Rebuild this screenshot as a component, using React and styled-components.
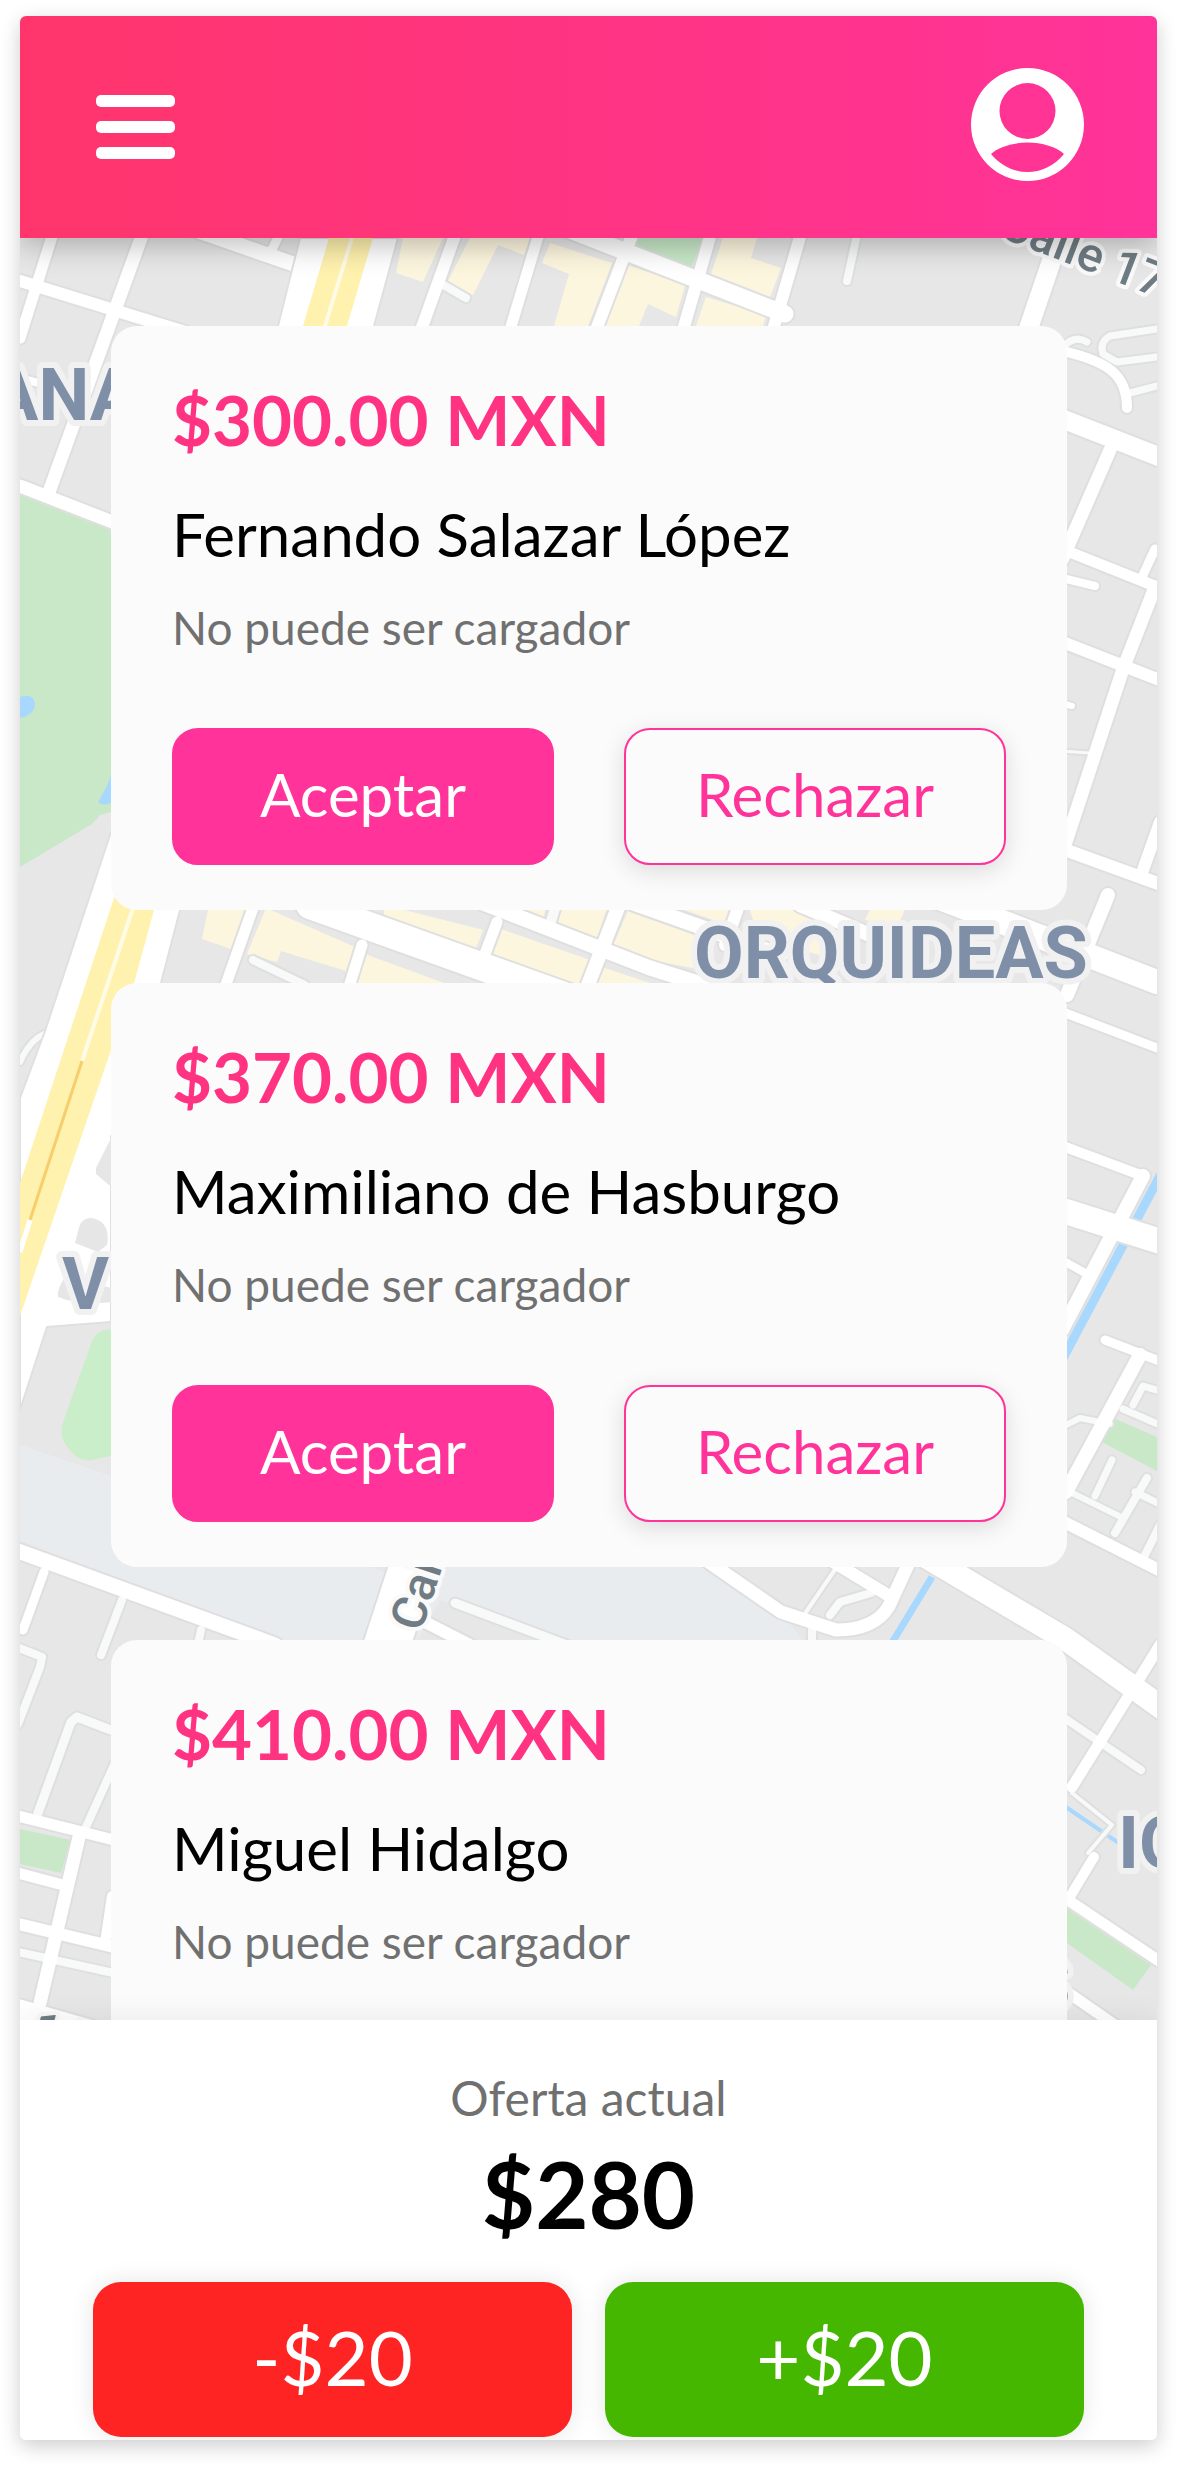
import React, { useState } from "react";
import styled, { createGlobalStyle } from "styled-components";

const offers = [
    { id: 1, price: 300, name: "Fernando Salazar López", note: "No puede ser cargador" },
    { id: 2, price: 370, name: "Maximiliano de Hasburgo", note: "No puede ser cargador" },
    { id: 3, price: 410, name: "Miguel Hidalgo", note: "No puede ser cargador" },
];

const blocks = [
    "403,238 443,238 423,282 396,273",
    "470,238 530,238 524,255 498,245 473,295 447,283",
    "550,243 612,263 588,326 554,326 569,274 542,263",
    "627,265 685,285 676,317 648,304 639,326 605,326",
    "723,238 757,238 751,258 781,268 770,297 710,277",
    "706,297 766,315 763,326 696,326",
    "209,905 247,905 231,949 202,939",
    "266,908 355,947 346,971 281,951 277,962 247,954",
    "365,954 444,983 444,990 355,990",
    "385,905 483,930 473,956 383,919",
    "501,929 590,960 580,990 550,986 488,962",
    "509,905 546,905 543,922",
    "563,905 608,905 595,945 555,930",
    "628,911 700,937 693,968 610,952",
    "602,967 650,983 650,990 593,990",
    "670,905 732,905 725,924",
    "748,905 795,905 850,930 840,960 760,940",
    "872,905 907,905 898,925 865,920",
];

const parks = [
    "20,495 111,530 111,812 100,815 92,824 20,867",
    "637,238 704,238 691,268 637,248",
    "1113,1418 1157,1437 1157,1471 1102,1442",
    "1067,1908 1072,1912 1151,1965 1133,1990 1067,1943",
    "20,1829 71,1840 61,1873 20,1864",
];

const roads = [
    ["M20 281L185 332", 12],
    ["M54 230L20 338", 11],
    ["M144 230L49 492", 13],
    ["M190 228L305 268", 15],
    ["M282 230L268 257", 9],
    ["M20 378L50 386", 8],
    ["M20 486L115 523", 13],
    ["M457 230L421 330", 12],
    ["M540 230L510 330", 11],
    ["M634 230L596 330", 12],
    ["M712 230L683 330", 12],
    ["M802 230L773 330", 12],
    ["M570 230L785 314", 17],
    ["M1062 230L1028 330", 19],
    ["M254 905L224 990", 11],
    ["M362 945L348 990", 11],
    ["M310 905L575 1000", 28],
    ["M497 922L482 962", 11],
    ["M483 903L650 968L720 990", 15],
    ["M619 905L586 990", 14],
    ["M633 903L780 955", 15],
    ["M739 905L725 945", 12],
    ["M800 905L870 935", 14],
    ["M940 898L1157 982", 24],
    ["M1108 895L1067 995", 14],
    ["M1067 352C1107 362 1127 374 1127 408", 10],
    ["M1060 418L1165 459", 19],
    ["M1110 450L1062 560", 13],
    ["M1062 549L1157 587", 11],
    ["M1062 578L1095 586", 8],
    ["M1155 549L1143 575", 9],
    ["M1155 587L1123 669L1066 842", 13],
    ["M1060 641L1162 681", 12],
    ["M1060 703L1072 706", 6],
    ["M1060 848L1162 885", 13],
    ["M1160 822L1143 870", 12],
    ["M1060 1011L1165 1051", 9],
    ["M1060 1145L1143 1176L1062 1330", 10],
    ["M1143 1176L1062 1330", 14],
    ["M1055 1208L1165 1243", 25],
    ["M1060 1259L1087 1274", 8],
    ["M1105 1340L1162 1362", 9],
    ["M1140 1355L1066 1492", 14],
    ["M1058 1519L1165 1573", 12],
    ["M925 1556L1067 1640L1165 1710", 23],
    ["M1160 1645L1128 1697L1072 1787", 11],
    ["M1094 1857L1068 1900", 10],
    ["M1068 1900L1162 1963", 11],
    ["M1060 1987L1122 2030", 11],
    ["M10 1548L275 1645", 15],
    ["M44 1572L23 1630", 9],
    ["M418 1550L382 1660", 46],
    ["M421 1620L470 1645", 12],
    ["M700 1556L781 1612L836 1630Q875 1630 889 1606L912 1556", 13],
    ["M830 1560L891 1597", 12],
    ["M14 1815L118 1841", 11],
    ["M14 1872L63 1885", 11],
    ["M80 1833L40 2003", 13],
    ["M14 1923L118 1948", 12],
    ["M112 1896L105 1943", 10],
    ["M14 2010L118 2040", 24],
];

const lanes = [
    ["M440 283L466 298", 8],
    ["M858 230L847 281", 8],
    ["M556 905L549 928", 10],
    ["M253 960L305 985", 8],
    ["M1157 329L1110 336Q1099 342 1103 354L1117 362L1157 357", 7],
    ["M1062 348Q1074 334 1087 342", 7],
    ["M1130 393L1157 386", 7],
    ["M1060 751L1090 753", 3],
    ["M20 1062Q30 1040 44 1034", 6],
    ["M1060 1428L1080 1418L1110 1424", 6],
    ["M1123 1409L1160 1425", 7],
    ["M1133 1405L1143 1386L1160 1391", 7],
    ["M1060 1487L1123 1518", 6],
    ["M1112 1460L1095 1496", 7],
    ["M1147 1478L1115 1533", 8],
    ["M1135 1492L1160 1504", 7],
    ["M1160 1525L1145 1555", 8],
    ["M1060 1715L1141 1770", 8],
    ["M1072 1793L1112 1825L1088 1853", 4],
    ["M122 1600L101 1655", 8],
    ["M201 1630L197 1648", 8],
    ["M14 1646L42 1657L40 1667L18 1724", 8],
    ["M116 1732L77 1717L71 1722L38 1813", 9],
    ["M114 1765L86 1827", 8],
    ["M14 1951L118 1974", 8],
    ["M455 1603L575 1648", 9],
    ["M871 1593L840 1602L830 1615", 8],
    ["M836 1568L806 1612", 4],
    ["M812 1630L812 1645", 8],
];

function CityMap() {
    return (
        <MapSvg viewBox="20 238 1137 1782" preserveAspectRatio="xMidYMin slice" aria-hidden="true">
            <rect x="0" y="200" width="1200" height="1900" fill="#e7e7e7" />
            <path d="M20 1445L111 1476L700 1556L781 1612L806 1645H260L20 1555Z" fill="#e9ecef" />
            <path d="M440 1600L566 1645H415Z" fill="#e7e7e7" />
            <path d="M355 1560L396 1560L392 1576Z" fill="#e7e7e7" />
            {parks.map((p) => (
                <polygon key={p} points={p} fill="#c8e8c8" />
            ))}
            <path d="M120 1328L105 1330Q96 1332 92 1341L62 1425Q60 1437 66 1445Q76 1462 92 1460L120 1454Z" fill="#caeeca" />
            {blocks.map((p) => (
                <polygon key={p} points={p} fill="#fdf6df" />
            ))}
            <g fill="none" stroke="#a9d8ff">
                <path d="M1162 1172L1060 1364" strokeWidth="9" />
                <path d="M932 1577L890 1646" strokeWidth="7" />
                <path d="M1060 1803L1160 1871" strokeWidth="4" />
            </g>
            <path d="M20 697Q35 692 35 706Q32 716 20 718Z" fill="#a9d8ff" />
            <path d="M115 765L106 788L98 802Q104 808 115 800Z" fill="#a9d8ff" />

            {/* road edges first, so that crossings stay open */}
            <g fill="none" stroke="#dfdfdf" strokeLinejoin="round" strokeLinecap="round">
                {roads.concat(lanes).map(([d, w]) => (
                    <path key={d + w} d={d} strokeWidth={w + 4} />
                ))}
            </g>
            <g fill="none" stroke="#f8faf9" strokeLinejoin="round" strokeLinecap="round">
                {lanes.map(([d, w]) => (
                    <path key={d} d={d} strokeWidth={w} />
                ))}
            </g>
            <g fill="none" stroke="#ffffff" strokeLinejoin="round" strokeLinecap="round">
                {roads.map(([d, w]) => (
                    <path key={d + w} d={d} strokeWidth={w} />
                ))}
            </g>

            <path
                d="M398 238L374 326L180 910L161 983L111 1137V1322L47 1327L20 1410V1098L45 1031L111 832L278 326L300 238Z"
                fill="#ffffff"
                stroke="#e0e0e0"
                strokeWidth="2"
            />
            <path d="M329 238H373L347 326L154 910L134 983L111 1050L20 1316V1183L115 895L303 326Z" fill="#fff1ae" />
            <path d="M352 238L325 326L134 905L82 1061" fill="none" stroke="#fffbe6" strokeWidth="4" />
            <path d="M82 1061L30 1220" fill="none" stroke="#f6cf6c" strokeWidth="3" />
            <path d="M30 1220L20 1252" fill="none" stroke="#ffffff" strokeWidth="5" />
            <g fill="#e6e6e6">
                <path d="M115 1130L96 1168V1174L115 1190Z" />
                <path d="M75 1243L80 1224Q88 1214 100 1221Q110 1228 107 1245L98 1252Z" />
                <path d="M66 1276Q56 1290 58 1297Q80 1306 111 1302V1288Z" />
            </g>

            <District x="-10" y="420">ANA</District>
            <District x="694" y="978">ORQUIDEAS</District>
            <District x="62" y="1309">V</District>
            <District x="1118" y="1868">IO</District>
            <District x="1026" y="2010">S</District>
            <Street transform="translate(997 236) rotate(21)">Calle 17</Street>
            <Street transform="translate(421 1633) rotate(-72)">Calle</Street>
            <Street transform="translate(30 2044) rotate(14)">1 Nte</Street>
        </MapSvg>
    );
}

function OfferCard({ offer }) {
    return (
        <Card>
            <Price>${offer.price.toFixed(2)} MXN</Price>
            <Name>{offer.name}</Name>
            <Note>{offer.note}</Note>
            <Actions>
                <ActionButton type="button">Aceptar</ActionButton>
                <ActionButton type="button" $outline>
                    Rechazar
                </ActionButton>
            </Actions>
        </Card>
    );
}

function App() {
    const [bid, setBid] = useState(280);

    return (
        <>
            <GlobalStyle />
            <Screen>
                <Header>
                    <IconButton type="button" aria-label="Menú">
                        <svg width="80" height="72" viewBox="0 0 80 72" fill="#ffffff">
                            <rect y="6" width="79" height="12" rx="5" />
                            <rect y="32" width="79" height="12" rx="5" />
                            <rect y="58" width="79" height="12" rx="5" />
                        </svg>
                    </IconButton>
                    <IconButton type="button" aria-label="Perfil">
                        <svg width="113" height="113" viewBox="0 0 113 113">
                            <path
                                fill="#ffffff"
                                fillRule="evenodd"
                                d="M56.500 0a56.500 56.500 0 0 1 0 113a56.500 56.500 0 0 1 0-113ZM56.500 15a28 28 0 0 0 0 56a28 28 0 0 0 0-56ZM56.500 74.500C42 74.500 27 79 20 86C30 98 43 104 56.500 104S83 98 93 86C86 79 71 74.500 56.500 74.500Z"
                            />
                        </svg>
                    </IconButton>
                </Header>
                <Stage>
                    <CityMap />
                    <OfferList>
                        {offers.map((offer) => (
                            <OfferCard key={offer.id} offer={offer} />
                        ))}
                    </OfferList>
                </Stage>
                <Footer>
                    <BidLabel>Oferta actual</BidLabel>
                    <Bid>${bid}</Bid>
                    <Steps>
                        <StepButton type="button" $color="#ff2424" onClick={() => setBid(bid - 20)}>
                            -$20
                        </StepButton>
                        <StepButton type="button" $color="#45b700" onClick={() => setBid(bid + 20)}>
                            +$20
                        </StepButton>
                    </Steps>
                </Footer>
            </Screen>
        </>
    );
}

export default App;

const GlobalStyle = createGlobalStyle`
    * {
        box-sizing: border-box;
    }
    body {
        margin: 0;
        background: #ffffff;
        font-family: Lato, "Open Sans", sans-serif;
    }
    button {
        font-family: inherit;
        cursor: pointer;
    }
`;

const Screen = styled.main`
    display: flex;
    flex-direction: column;
    height: calc(100vh - 41px);
    margin: 16px 21px 25px 20px;
    border-radius: 6px;
    overflow: hidden;
    background: #ffffff;
    box-shadow: 0 6px 20px rgba(0, 0, 0, 0.2);
`;
const Header = styled.header`
    position: relative;
    z-index: 1;
    display: flex;
    align-items: center;
    justify-content: space-between;
    padding: 52px 73px 57px 76px;
    background: linear-gradient(90deg, #ff356c, #ff3399);
    box-shadow: 0 6px 30px rgba(0, 0, 0, 0.28);
`;
const IconButton = styled.button`
    display: flex;
    padding: 0;
    border: 0;
    background: none;
`;
const Stage = styled.section`
    flex: 1;
    min-height: 0;
    display: grid;
    grid-template-columns: minmax(0, 1fr);
    grid-template-rows: minmax(0, 1fr);
`;
const MapSvg = styled.svg`
    grid-area: 1 / 1;
    width: 100%;
    height: 100%;
`;
const District = styled.text`
    font: 700 72px Roboto, sans-serif;
    fill: #7f8fa8;
    stroke: #f1f1f1;
    stroke-width: 12px;
    stroke-linejoin: round;
    paint-order: stroke;
`;
const Street = styled.text`
    font: 500 48px Roboto, sans-serif;
    fill: #6f7c83;
    stroke: #fafafa;
    stroke-width: 8px;
    stroke-linejoin: round;
    paint-order: stroke;
`;
const OfferList = styled.div`
    grid-area: 1 / 1;
    display: flex;
    flex-direction: column;
    gap: 73px;
    padding: 88px 90px 73px 91px;
    overflow-y: auto;
    scrollbar-width: none;
`;
const Card = styled.article`
    flex-shrink: 0;
    padding: 54px 61px 45px;
    border-radius: 26px;
    background: #fbfbfb;
`;
const Price = styled.h2`
    margin: 0 0 38px;
    font-size: 69px;
    line-height: 80px;
    font-weight: 700;
    color: #ff3382;
`;
const Name = styled.p`
    margin: 0 0 30px;
    font-size: 60px;
    line-height: 72px;
    color: #000000;
`;
const Note = styled.p`
    margin: 0 0 72px;
    font-size: 46px;
    line-height: 56px;
    color: #707070;
`;
const Actions = styled.div`
    display: grid;
    grid-template-columns: 1fr 1fr;
    gap: 70px;
`;
const ActionButton = styled.button`
    height: 137px;
    padding: 0 0 6px;
    border: 2px solid #ff3399;
    border-radius: 26px;
    font-size: 60px;
    line-height: 72px;
    color: ${({ $outline }) => ($outline ? "#ff3399" : "#ffffff")};
    background: ${({ $outline }) => ($outline ? "#fbfbfb" : "#ff3399")};
    box-shadow: ${({ $outline }) => ($outline ? "0 6px 24px rgba(0, 0, 0, 0.13)" : "none")};
`;
const Footer = styled.footer`
    position: relative;
    z-index: 1;
    padding: 48px 73px 3px;
    text-align: center;
    background: #ffffff;
    box-shadow: 0 0 30px rgba(0, 0, 0, 0.08);
`;
const BidLabel = styled.p`
    margin: 0 0 10px;
    font-size: 48px;
    line-height: 60px;
    color: #707070;
`;
const Bid = styled.p`
    margin: 0 0 32px;
    font-size: 92px;
    line-height: 112px;
    font-weight: 700;
    color: #000000;
`;
const Steps = styled.div`
    display: grid;
    grid-template-columns: 1fr 1fr;
    gap: 33px;
`;
const StepButton = styled.button`
    height: 155px;
    padding: 0 0 6px;
    border: 0;
    border-radius: 28px;
    font-size: 76px;
    line-height: 92px;
    color: #ffffff;
    background: ${({ $color }) => $color};
    box-shadow: 0 0 24px rgba(0, 0, 0, 0.1);
`;
